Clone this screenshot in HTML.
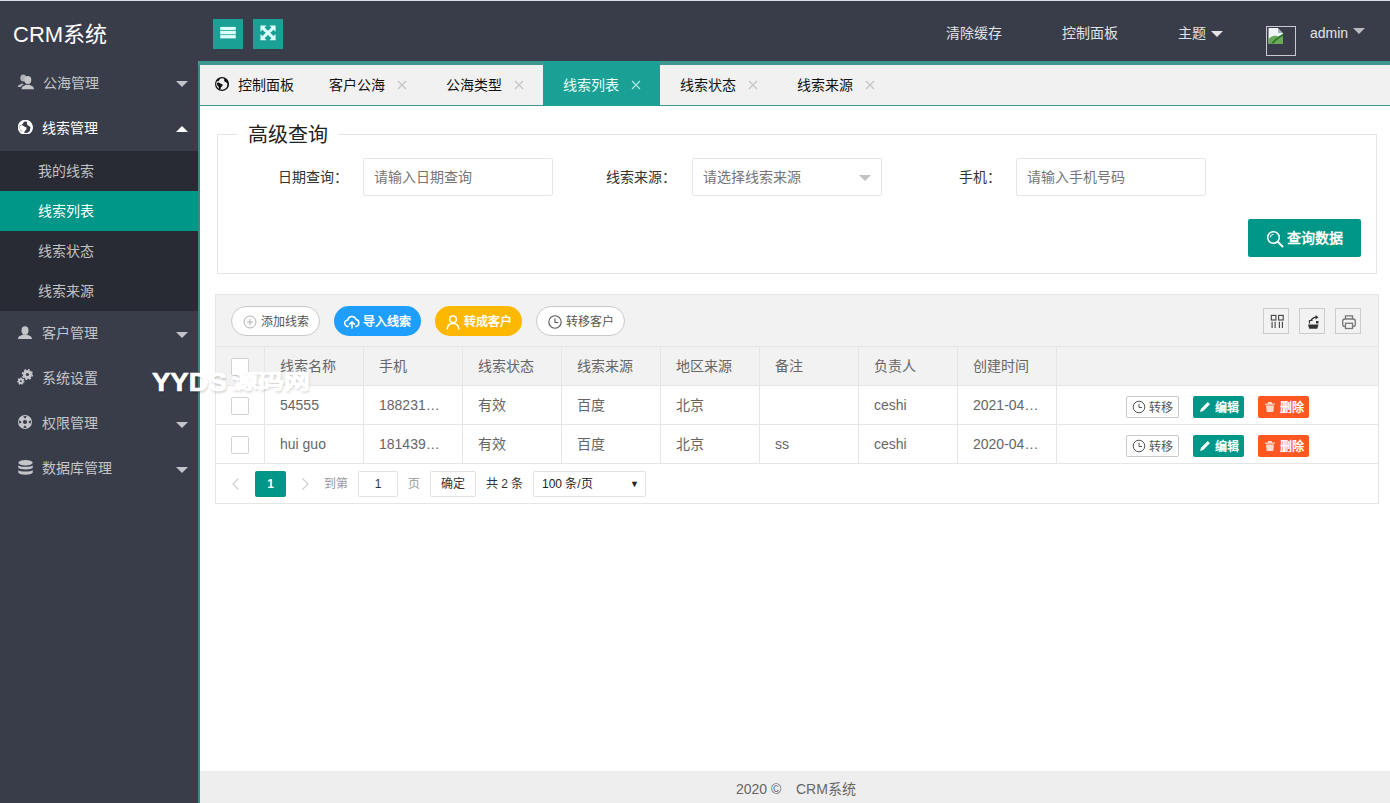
<!DOCTYPE html>
<html lang="zh-CN">
<head>
<meta charset="utf-8">
<title>CRM系统</title>
<style>
*{box-sizing:border-box;margin:0;padding:0}
html,body{width:1390px;height:803px;overflow:hidden;background:#fff}
body{font-family:"Liberation Sans",sans-serif;font-size:14px;color:#333;position:relative;line-height:1}
.abs{position:absolute}
svg{display:block}
/* ---------- header ---------- */
#topline{left:0;top:0;width:1390px;height:1px;background:#d9dce9;z-index:50}
#header{left:0;top:0;width:1390px;height:61px;background:#393d49}
#logo{left:13px;top:22px;font-size:22px;color:#fff;line-height:26px;white-space:nowrap}
.hbtn{top:19px;width:30px;height:30px;background:#1aa094}
.hnav{top:0;height:60px;line-height:66px;color:#e2e3e6;font-size:14px;white-space:nowrap}
.caret-d{width:0;height:0;border-left:6px solid transparent;border-right:6px solid transparent;border-top:6px solid #c2c4c9}
.caret-u{width:0;height:0;border-left:6px solid transparent;border-right:6px solid transparent;border-bottom:6px solid #fff}
/* ---------- sidebar ---------- */
#side{left:0;top:60px;width:198px;height:743px;background:#393d49}
.nav{left:0;width:198px;height:45px;line-height:45px;color:#c4c5c9;font-size:14px;white-space:nowrap}
.nav>span{position:absolute;left:43px;top:0}
.nav.on{color:#fff}
.nav .ic{position:absolute;left:18px;top:14px}
.nav .caret-d{position:absolute;left:176px;top:21px}
.nav .caret-u{position:absolute;left:176px;top:21px}
#sub{left:0;top:91px;width:198px;height:160px;background:#282b33}
.sub{left:0;width:198px;height:40px;line-height:40px;padding-left:37.500px;color:#c0c1c4;font-size:14px;white-space:nowrap}
.sub.on{background:#009688;color:#fff}
/* ---------- body frame ---------- */
#bleft{left:198px;top:61px;width:2px;height:742px;background:#3d8a85}
#btop{left:198px;top:61px;width:1192px;height:4px;background:#3f9890}
#tabs{left:200px;top:65px;width:1190px;height:40px;background:#f1f1f1}
#tabline{left:200px;top:105px;width:1190px;height:1px;background:#3f9890}
.tab{top:65px;height:40px;line-height:41px;font-size:14px;color:#111;white-space:nowrap}
.tab.on{top:61px;height:45px;line-height:49px;background:#1aa094;color:#e8fffb}
.tab .x{position:absolute;top:15px;width:10px;height:10px}
.tab.on .x{top:19px}

/* ---------- query form ---------- */
#fs{left:217px;top:134px;width:1160px;height:140px;border:1px solid #e6e6e6}
#legend{left:237px;top:121px;width:101px;height:28px;background:#fff;font-size:20px;line-height:28px;color:#222;padding-left:11px;white-space:nowrap;font-weight:300}
.lbl{top:158px;height:38px;line-height:39px;font-size:14px;color:#333;white-space:nowrap;text-align:right;width:110px;padding-right:15px}
.inp{top:158px;width:190px;height:38px;border:1px solid #e6e6e6;border-radius:2px;background:#fff;line-height:37px;padding-left:10px;font-size:14px;color:#757575;white-space:nowrap}
#qbtn{left:1248px;top:219px;width:113px;height:38px;background:#009688;border-radius:2px;color:#fff;font-size:14px;line-height:38px;white-space:nowrap}

/* ---------- table ---------- */
#tbox{left:215px;top:294px;width:1164px;height:210px;border:1px solid #e6e6e6;background:#fff}
#tool{left:216px;top:295px;width:1162px;height:52px;background:#f2f2f2;border-bottom:1px solid #e6e6e6}
#thead{left:216px;top:347px;width:1162px;height:39px;background:#f2f2f2;border-bottom:1px solid #e6e6e6}
.hline{left:216px;width:1162px;height:1px;background:#e6e6e6}
.vline{top:347px;width:1px;height:116px;background:#e6e6e6}
.pill{top:306px;height:30px;border-radius:15px;font-size:12px;line-height:32px;white-space:nowrap;color:#fff}
.pill.w{background:#fff;border:1px solid #c9c9c9;color:#555;line-height:30px}
.pill>span{position:absolute;top:0}
.th,.td{font-size:14px;color:#666;white-space:nowrap;height:38px;line-height:39px}
.th{top:347px}
.r1{top:386px}.r2{top:425px}
.cb{left:231px;width:18px;height:18px;border:1px solid #d2d2d2;border-radius:2px;background:#fff}
.tbx{top:308px;width:26px;height:26px;border:1px solid #ccc}.tbx svg{margin:1px 0 0 1px}
.xs{height:22px;border-radius:2px;font-size:12px;line-height:24px;color:#fff;white-space:nowrap}
.xs>span{position:absolute;top:0}
.xs.w{background:#fff;border:1px solid #c9c9c9;color:#555;line-height:22px}
.xs.g{background:#009688}
.xs.o{background:#ff5722}
.pg{top:471px;height:26px;line-height:26px;font-size:12px;color:#666;white-space:nowrap}
.pgb{border:1px solid #e2e2e2;border-radius:2px;background:#fff;text-align:center;line-height:25px}
#footer{left:200px;top:771px;width:1190px;height:32px;background:#eee;color:#666;font-size:14px;line-height:37px;white-space:nowrap}
.wm{font-weight:bold;color:#fff;-webkit-text-stroke:.700px #fff;transform-origin:0 0;white-space:nowrap;text-shadow:1px 2px 2px rgba(0,0,0,.16);z-index:40}
.j{display:inline-block;text-align:justify;text-align-last:justify;white-space:nowrap}
</style>
</head>
<body>
<div id="header" class="abs"></div>
<div id="topline" class="abs"></div>
<div id="logo" class="abs">CRM<span class="j" style="width:2em">系统</span></div>

<div class="abs hbtn" style="left:213px">
  <svg width="30" height="30" viewBox="0 0 30 30" fill="#dcfffb"><rect x="7.200" y="7.900" width="15.600" height="3.300"/><rect x="7.200" y="12" width="15.600" height="3.300"/><rect x="7.200" y="16.100" width="15.600" height="3.300"/></svg>
</div>
<div class="abs hbtn" style="left:253px">
  <svg width="30" height="30" viewBox="0 0 30 30"><g transform="translate(7.400 6.600)" fill="#dcfffb" stroke="#dcfffb"><path d="M0 0h6.200L0 6.200zM15.200 0v6.200L9 0zM0 14.600v-6.200l6.200 6.200zM15.200 14.600H9l6.200-6.200z" stroke="none"/><path d="M2.500 2.500l10.200 9.600M12.700 2.500L2.500 12.100" stroke-width="3" fill="none"/></g></svg>
</div>

<div class="abs hnav" style="left:946px"><span class="j" style="width:4em">清除缓存</span></div>
<div class="abs hnav" style="left:1062px"><span class="j" style="width:4em">控制面板</span></div>
<div class="abs hnav" style="left:1178px"><span class="j" style="width:2em">主题</span></div>
<div class="abs caret-d" style="left:1211px;top:31px;border-top-color:#e4e4e7"></div>
<div class="abs" style="left:1266px;top:26px;width:30px;height:30px;border:1px solid #c9cad0;background:#393d49">
  <svg width="17" height="17" viewBox="0 0 17 17" style="margin:0 0 0 0"><path d="M1.500 1h9.500l5 5v10.500H1.500z" fill="#eef4f6"/><path d="M11 1v5h5z" fill="#aab0b8"/><path d="M11 1l5 5v-5z" fill="#393d49"/><path d="M1.500 16.500v-4.500c3-3.500 7-3.800 10-2.500l4.500-3v10.500z" fill="#6aa85a"/><path d="M4 16.500c3-4 7-7 12-9.500v2c-4 2-7 4.500-9.500 7.500z" fill="#2f7a2a"/></svg>
</div>
<div class="abs hnav" style="left:1310px">admin</div>
<div class="abs caret-d" style="left:1353px;top:28px;border-top-color:#b9bbc1"></div>

<!-- sidebar -->
<div id="side" class="abs">
  <div class="abs nav" style="top:0"><svg class="ic" style="left:17px;top:14px;color:#c4c5c9" width="18" height="16" viewBox="0 0 18 16" fill="currentColor"><ellipse cx="6.300" cy="3.900" rx="3" ry="3.500" opacity=".85"/><path d="M.600 13c.300-2.300 2.600-2.600 4.200-3.600l2 .800c-1.500 1.400-2.700 1.800-3 2.800z" opacity=".85"/><ellipse cx="10.800" cy="6" rx="3.500" ry="4.100"/><path d="M4.600 15.300c0-3.200 2.600-3.300 4.300-4.600h3.800c1.700 1.300 4.300 1.400 4.300 4.600z"/></svg><span style="top:1px"><span class="j" style="width:4em">公海管理</span></span><i class="caret-d"></i></div>
  <div class="abs nav on" style="top:45px"><svg class="ic" style="left:18px;top:14.500px;color:#fff" width="14.600" height="14.600" viewBox="0 0 14 14"><circle cx="7" cy="7" r="6.400" fill="none" stroke="currentColor" stroke-width="1.700"/><path d="M1.400 3.900L2.400 2.300 3.900 1.300 5.100 1.600 4.400 3 3.200 4.200zM9.400 1.200L11.800 2.500 13.200 4.900 13.600 7.500 13.100 10.100 12 11.700 12.300 9 12.500 6.400 11 5.300 9.500 4.600 9.100 3zM2.200 5.800L3.900 5.600 5.800 6.700 7.600 7.500 7.500 9 6.200 10.100 5.400 11.900 4.700 13 3.900 11.900 3.700 9.700 2.400 8.600 2 7.100z" fill="currentColor" stroke="currentColor" stroke-width="1.100" stroke-linejoin="round"/></svg><span style="left:42px;top:1px"><span class="j" style="width:4em">线索管理</span></span><i class="caret-u"></i></div>
  <div id="sub" class="abs">
    <div class="abs sub" style="top:0"><span class="j" style="width:4em">我的线索</span></div>
    <div class="abs sub on" style="top:40px"><span class="j" style="width:4em">线索列表</span></div>
    <div class="abs sub" style="top:80px"><span class="j" style="width:4em">线索状态</span></div>
    <div class="abs sub" style="top:120px"><span class="j" style="width:4em">线索来源</span></div>
  </div>
  <div class="abs nav" style="top:251px"><svg class="ic" style="left:18px;top:15px;color:#c4c5c9" width="14" height="14" viewBox="0 0 14 14" fill="currentColor"><ellipse cx="7" cy="4.500" rx="3.500" ry="4.200"/><path d="M0 13c0-3.200 3-3.300 5-4.600h4c2 1.300 5 1.400 5 4.600z"/></svg><span style="left:42px"><span class="j" style="width:4em">客户管理</span></span><i class="caret-d"></i></div>
  <div class="abs nav" style="top:296px"><svg class="ic" style="left:17px;top:12.300px;color:#c4c5c9" width="16" height="18" viewBox="0 0 16 18"><circle cx="10.400" cy="6.500" r="3.100" fill="none" stroke="currentColor" stroke-width="3"/><circle cx="10.400" cy="6.500" r="4.900" fill="none" stroke="currentColor" stroke-width="1.500" stroke-dasharray="1.920 1.920"/><circle cx="3.900" cy="13.200" r="1.900" fill="none" stroke="currentColor" stroke-width="2"/><circle cx="3.900" cy="13.200" r="3.100" fill="none" stroke="currentColor" stroke-width="1.100" stroke-dasharray="1.390 1.390"/></svg><span style="left:42px"><span class="j" style="width:4em">系统设置</span></span></div>
  <div class="abs nav" style="top:341px"><svg class="ic" style="left:18px;top:14px;color:#c4c5c9" width="14" height="14" viewBox="0 0 14 14"><circle cx="7" cy="7" r="7" fill="currentColor"/><circle cx="7" cy="7" r="2.100" fill="#393d49"/><path d="M5.400 1h3.200l-.700 2.200h-1.800zM5.400 13h3.200l-.700-2.200h-1.800zM1 5.400v3.200l2.200-.700v-1.800zM13 5.400v3.200l-2.200-.700v-1.800z" fill="#393d49" opacity=".9"/></svg><span style="left:42px"><span class="j" style="width:4em">权限管理</span></span><i class="caret-d"></i></div>
  <div class="abs nav" style="top:386px"><svg class="ic" style="left:18px;top:13.500px;color:#c4c5c9" width="15" height="16" viewBox="0 0 15 16" fill="currentColor"><ellipse cx="7.500" cy="2.800" rx="7.200" ry="2.800"/><path d="M.300 5.200c1.500 2 12.900 2 14.400 0v2.600c-1.500 2.300-12.900 2.300-14.400 0zM.300 10c1.500 2 12.900 2 14.400 0v2.800c-1.500 2.600-12.900 2.600-14.400 0z"/></svg><span style="left:42px"><span class="j" style="width:5em">数据库管理</span></span><i class="caret-d"></i></div>
</div>

<!-- body frame -->
<div id="bleft" class="abs"></div>
<div id="btop" class="abs"></div>
<div id="tabs" class="abs"></div>
<div id="tabline" class="abs"></div>

<!-- tabs -->
<div class="abs tab" style="left:200px;width:109px">
  <svg class="abs" style="left:15px;top:12px;color:#111" width="14" height="14" viewBox="0 0 14 14"><circle cx="7" cy="7" r="6.400" fill="none" stroke="currentColor" stroke-width="1.200"/><path d="M1.400 3.900L2.400 2.300 3.900 1.300 5.100 1.600 4.400 3 3.200 4.200zM9.400 1.200L11.800 2.500 13.200 4.900 13.600 7.500 13.100 10.100 12 11.700 12.300 9 12.500 6.400 11 5.300 9.500 4.600 9.100 3zM2.200 5.800L3.900 5.600 5.800 6.700 7.600 7.500 7.500 9 6.200 10.100 5.400 11.900 4.700 13 3.900 11.900 3.700 9.700 2.400 8.600 2 7.100z" fill="currentColor"/></svg>
  <span class="abs" style="left:38px;top:0"><span class="j" style="width:4em">控制面板</span></span>
</div>
<div class="abs tab" style="left:309px;width:117px"><span class="abs" style="left:20px;top:0"><span class="j" style="width:4em">客户公海</span></span><svg class="x" style="left:88px" viewBox="0 0 10 10"><path d="M1 1l8 8M9 1l-8 8" stroke="#c4c4c4" stroke-width="1.200" fill="none"/></svg></div>
<div class="abs tab" style="left:426px;width:117px"><span class="abs" style="left:20px;top:0"><span class="j" style="width:4em">公海类型</span></span><svg class="x" style="left:88px" viewBox="0 0 10 10"><path d="M1 1l8 8M9 1l-8 8" stroke="#c4c4c4" stroke-width="1.200" fill="none"/></svg></div>
<div class="abs tab on" style="left:543px;width:117px"><span class="abs" style="left:20px;top:0"><span class="j" style="width:4em">线索列表</span></span><svg class="x" style="left:88px" viewBox="0 0 10 10"><path d="M1 1l8 8M9 1l-8 8" stroke="#a9e6df" stroke-width="1.200" fill="none"/></svg></div>
<div class="abs tab" style="left:660px;width:117px"><span class="abs" style="left:20px;top:0"><span class="j" style="width:4em">线索状态</span></span><svg class="x" style="left:88px" viewBox="0 0 10 10"><path d="M1 1l8 8M9 1l-8 8" stroke="#c4c4c4" stroke-width="1.200" fill="none"/></svg></div>
<div class="abs tab" style="left:777px;width:117px"><span class="abs" style="left:20px;top:0"><span class="j" style="width:4em">线索来源</span></span><svg class="x" style="left:88px" viewBox="0 0 10 10"><path d="M1 1l8 8M9 1l-8 8" stroke="#c4c4c4" stroke-width="1.200" fill="none"/></svg></div>

<!-- query form -->
<div id="fs" class="abs"></div>
<div id="legend" class="abs"><span class="j" style="width:4em">高级查询</span></div>
<div class="abs lbl" style="left:252.500px"><span class="j" style="width:5em">日期查询：</span></div>
<div class="abs inp" style="left:363px"><span class="j" style="width:7em">请输入日期查询</span></div>
<div class="abs lbl" style="left:581px"><span class="j" style="width:5em">线索来源：</span></div>
<div class="abs inp" style="left:692px"><span class="j" style="width:7em">请选择线索来源</span></div>
<div class="abs caret-d" style="left:859px;top:174.500px;border-top-color:#c2c2c2"></div>
<div class="abs lbl" style="left:905.500px"><span class="j" style="width:3em">手机：</span></div>
<div class="abs inp" style="left:1016px"><span class="j" style="width:7em">请输入手机号码</span></div>
<div id="qbtn" class="abs">
  <svg class="abs" style="left:18px;top:11px" width="18" height="18" viewBox="0 0 18 18"><circle cx="7.500" cy="7.500" r="5.800" fill="none" stroke="#fff" stroke-width="1.500"/><path d="M11.800 11.800l4.700 4.700" stroke="#fff" stroke-width="2" stroke-linecap="round"/><path d="M4.300 7.500a3.200 3.200 0 0 1 3.200-3.200" stroke="#fff" stroke-width="1" fill="none"/></svg>
  <span class="abs" style="left:39px;top:0;font-weight:bold"><span class="j" style="width:4em">查询数据</span></span>
</div>
<!-- table -->
<div id="tbox" class="abs"></div>
<div id="tool" class="abs"></div>
<div id="thead" class="abs"></div>
<div class="abs hline" style="top:424px"></div>
<div class="abs hline" style="top:463px"></div>
<div class="abs vline" style="left:264px"></div>
<div class="abs vline" style="left:363px"></div>
<div class="abs vline" style="left:462px"></div>
<div class="abs vline" style="left:561px"></div>
<div class="abs vline" style="left:660px"></div>
<div class="abs vline" style="left:759px"></div>
<div class="abs vline" style="left:858px"></div>
<div class="abs vline" style="left:957px"></div>
<div class="abs vline" style="left:1056px"></div>
<div class="abs pill w" style="left:231px;width:89px"><svg class="abs" style="left:11px;top:8px" width="14" height="14" viewBox="0 0 14 14"><circle cx="7" cy="7" r="6" fill="none" stroke="#b0b0b0" stroke-width="1"/><path d="M7 3.800v6.400M3.800 7h6.400" stroke="#b0b0b0" stroke-width="1"/></svg><span style="left:29px"><span class="j" style="width:4em">添加线索</span></span></div>
<div class="abs pill" style="left:334px;width:87px;background:#1e9fff"><svg class="abs" style="left:10px;top:8.500px" width="16" height="14" viewBox="0 0 16 14"><path d="M4.200 11.500a3.300 3.300 0 0 1-.400-6.600 4.300 4.300 0 0 1 8.300-.300 3.500 3.500 0 0 1-.300 6.900" fill="none" stroke="#fff" stroke-width="1.500" stroke-linecap="round"/><path d="M8 13V7M5.600 9.200L8 6.800l2.400 2.400" fill="none" stroke="#fff" stroke-width="1.500" stroke-linecap="round" stroke-linejoin="round"/></svg><span style="left:29px;font-weight:bold"><span class="j" style="width:4em">导入线索</span></span></div>
<div class="abs pill" style="left:435px;width:87px;background:#ffb800"><svg class="abs" style="left:11px;top:8.500px" width="14" height="15" viewBox="0 0 14 15"><circle cx="7" cy="4.300" r="3.300" fill="none" stroke="#fff" stroke-width="1.500"/><path d="M1.200 14c.300-3.600 2.600-5.600 5.800-5.600s5.500 2 5.800 5.600" fill="none" stroke="#fff" stroke-width="1.500" stroke-linecap="round"/></svg><span style="left:29px;font-weight:bold"><span class="j" style="width:4em">转成客户</span></span></div>
<div class="abs pill w" style="left:536px;width:89px"><svg class="abs" style="left:11px;top:8px" width="14" height="14" viewBox="0 0 14 14"><circle cx="7" cy="7" r="6.200" fill="none" stroke="#555" stroke-width="1.100"/><path d="M7 3.500V7.500H10.200" fill="none" stroke="#555" stroke-width="1.100"/></svg><span style="left:29px"><span class="j" style="width:4em">转移客户</span></span></div>
<div class="abs tbx" style="left:1263px"><svg width="24" height="24" viewBox="0 0 24 24" fill="none" stroke="#444" stroke-width="1.100"><rect x="6.300" y="5.400" width="4.600" height="4.600"/><rect x="13.600" y="5.400" width="4.600" height="4.600"/><path d="M7.100 11.800v6.100M10.100 11.800v6.100M14.400 11.800v6.100M17.400 11.800v6.100"/></svg></div>
<div class="abs tbx" style="left:1299px"><svg width="24" height="24" viewBox="0 0 24 24"><path d="M7 14.500h10.500l-1.200 4.300H8.200z" fill="#333"/><path d="M8.500 13.500v-3h3" fill="none" stroke="#333" stroke-width="1.200"/><path d="M10 10c2-2.500 4-3 6-2.800" fill="none" stroke="#333" stroke-width="1.300"/><path d="M14.500 5l3 2.300-3 2.300z" fill="#333"/><rect x="15" y="11" width="2.500" height="2.500" fill="#333"/></svg></div>
<div class="abs tbx" style="left:1335px"><svg width="24" height="24" viewBox="0 0 24 24" fill="none" stroke="#777" stroke-width="1.300"><path d="M8.500 9V5.800h7V9"/><rect x="5.700" y="9" width="12.600" height="7.500" rx="2.200"/><rect x="8.500" y="13.300" width="7" height="5.200" fill="#f2f2f2"/></svg></div>
<div class="abs cb" style="top:358px"></div>
<div class="abs th" style="left:280px"><span class="j" style="width:4em">线索名称</span></div>
<div class="abs th" style="left:379px"><span class="j" style="width:2em">手机</span></div>
<div class="abs th" style="left:478px"><span class="j" style="width:4em">线索状态</span></div>
<div class="abs th" style="left:577px"><span class="j" style="width:4em">线索来源</span></div>
<div class="abs th" style="left:676px"><span class="j" style="width:4em">地区来源</span></div>
<div class="abs th" style="left:775px"><span class="j" style="width:2em">备注</span></div>
<div class="abs th" style="left:874px"><span class="j" style="width:3em">负责人</span></div>
<div class="abs th" style="left:973px"><span class="j" style="width:4em">创建时间</span></div>
<div class="abs cb" style="top:397px"></div>
<div class="abs td r1" style="left:280px">54555</div>
<div class="abs td r1" style="left:379px">188231…</div>
<div class="abs td r1" style="left:478px"><span class="j" style="width:2em">有效</span></div>
<div class="abs td r1" style="left:577px"><span class="j" style="width:2em">百度</span></div>
<div class="abs td r1" style="left:676px"><span class="j" style="width:2em">北京</span></div>
<div class="abs td r1" style="left:874px">ceshi</div>
<div class="abs td r1" style="left:973px">2021-04…</div>
<div class="abs xs w" style="left:1126px;top:396px;width:53px"><svg class="abs" style="left:5px;top:3px" width="14" height="14" viewBox="0 0 14 14"><circle cx="7" cy="7" r="5.800" fill="none" stroke="#555" stroke-width="1"/><path d="M7 3.800V7.500H10" fill="none" stroke="#555" stroke-width="1"/></svg><span style="left:22px"><span class="j" style="width:2em">转移</span></span></div>
<div class="abs xs g" style="left:1193px;top:396px;width:51px"><svg class="abs" style="left:6px;top:5px" width="12" height="12" viewBox="0 0 12 12"><path d="M1 11l1-3.200L8.800 1l2.200 2.200L4.200 10z" fill="#fff"/></svg><span style="left:22px;font-weight:bold"><span class="j" style="width:2em">编辑</span></span></div>
<div class="abs xs o" style="left:1258px;top:396px;width:51px"><svg class="abs" style="left:6px;top:5px" width="12" height="12" viewBox="0 0 12 12"><path d="M1 2.500h10v1.300H1zM4 1h4v1.500H4zM2 4.500h8l-.700 6.500H2.700z" fill="#ffd9cc"/></svg><span style="left:22px;font-weight:bold"><span class="j" style="width:2em">删除</span></span></div>
<div class="abs cb" style="top:436px"></div>
<div class="abs td r2" style="left:280px">hui guo</div>
<div class="abs td r2" style="left:379px">181439…</div>
<div class="abs td r2" style="left:478px"><span class="j" style="width:2em">有效</span></div>
<div class="abs td r2" style="left:577px"><span class="j" style="width:2em">百度</span></div>
<div class="abs td r2" style="left:676px"><span class="j" style="width:2em">北京</span></div>
<div class="abs td r2" style="left:775px">ss</div>
<div class="abs td r2" style="left:874px">ceshi</div>
<div class="abs td r2" style="left:973px">2020-04…</div>
<div class="abs xs w" style="left:1126px;top:435px;width:53px"><svg class="abs" style="left:5px;top:3px" width="14" height="14" viewBox="0 0 14 14"><circle cx="7" cy="7" r="5.800" fill="none" stroke="#555" stroke-width="1"/><path d="M7 3.800V7.500H10" fill="none" stroke="#555" stroke-width="1"/></svg><span style="left:22px"><span class="j" style="width:2em">转移</span></span></div>
<div class="abs xs g" style="left:1193px;top:435px;width:51px"><svg class="abs" style="left:6px;top:5px" width="12" height="12" viewBox="0 0 12 12"><path d="M1 11l1-3.200L8.800 1l2.200 2.200L4.200 10z" fill="#fff"/></svg><span style="left:22px;font-weight:bold"><span class="j" style="width:2em">编辑</span></span></div>
<div class="abs xs o" style="left:1258px;top:435px;width:51px"><svg class="abs" style="left:6px;top:5px" width="12" height="12" viewBox="0 0 12 12"><path d="M1 2.500h10v1.300H1zM4 1h4v1.500H4zM2 4.500h8l-.700 6.500H2.700z" fill="#ffd9cc"/></svg><span style="left:22px;font-weight:bold"><span class="j" style="width:2em">删除</span></span></div>
<svg class="abs" style="left:231px;top:477px" width="10" height="14" viewBox="0 0 10 14"><path d="M7.500 1.500L2 7l5.500 5.500" fill="none" stroke="#d2d2d2" stroke-width="1.300"/></svg>
<div class="abs pg" style="left:255px;width:31px;background:#009688;border-radius:2px;color:#fff;text-align:center;font-weight:bold">1</div>
<svg class="abs" style="left:300px;top:477px" width="10" height="14" viewBox="0 0 10 14"><path d="M2.500 1.500L8 7l-5.500 5.500" fill="none" stroke="#d2d2d2" stroke-width="1.300"/></svg>
<div class="abs pg" style="left:324px;color:#999"><span class="j" style="width:2em">到第</span></div>
<div class="abs pg pgb" style="left:358px;width:40px;color:#333">1</div>
<div class="abs pg" style="left:408px;color:#999">页</div>
<div class="abs pg pgb" style="left:430px;width:46px;color:#333"><span class="j" style="width:2em">确定</span></div>
<div class="abs pg" style="left:486px;color:#333">共 2 条</div>
<div class="abs pg pgb" style="left:533px;width:113px;color:#222;text-align:left;padding-left:8px">100 条/页<span class="abs" style="left:96px;top:0;font-size:9px">▼</span></div>
<div id="footer" class="abs"><span class="abs" style="left:536px;top:0">2020 ©</span><span class="abs" style="left:596px;top:0">CRM<span class="j" style="width:2em">系统</span></span></div>
<div class="abs wm" style="left:151.500px;top:366.500px;font-size:25px;line-height:30px;transform:scaleX(1.1)">YYDS</div>
<div class="abs wm" style="left:231.500px;top:367.500px;font-size:20px;line-height:28px;transform:scaleX(1.29)"><span class="j" style="width:3em">源码网</span></div>

</body>
</html>
